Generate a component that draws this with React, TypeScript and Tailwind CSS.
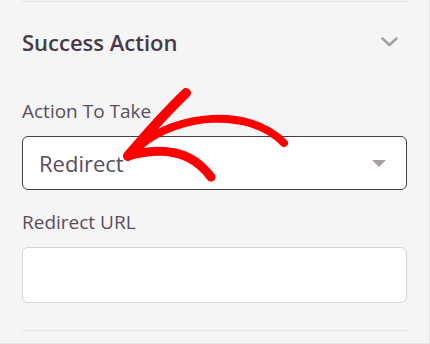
import { useState } from "react";

const SelectCaret = () => (
  <svg width="14" height="7" viewBox="0 0 14 7" className="shrink-0">
    <path d="M0 0 H14 L7 7 Z" fill="#a8a0a8" />
  </svg>
);

const Chevron = () => (
  <svg width="17" height="10" viewBox="0 0 17 10" className="shrink-0">
    <path
      d="M1.5 1.5 L8.5 8 L15.5 1.5"
      fill="none"
      stroke="#a59ca5"
      strokeWidth="2.4"
      strokeLinecap="round"
      strokeLinejoin="round"
    />
  </svg>
);

// hand drawn red arrow pointing at the select
const RedArrow = () => (
  <svg
    className="absolute inset-0 pointer-events-none"
    width="430"
    height="344"
    viewBox="0 0 430 344"
  >
    <g fill="none" stroke="#ff0000" strokeLinecap="round" strokeLinejoin="round">
      <path d="M186 93 Q160 118 128 156" strokeWidth="10" />
      <path d="M141 145 C176 115 248 106 284 143" strokeWidth="8" />
      <path d="M128 156 Q184 140 211 177" strokeWidth="9" />
    </g>
  </svg>
);

export default function App() {
  const [url, setUrl] = useState("");

  return (
    <div className="relative w-[430px] h-[344px] overflow-hidden bg-[#f5f5f5] border-r border-b border-[#e4e4e4] font-['Open_Sans',sans-serif]">
      <div className="px-[22px]">
        <div className="h-px bg-[#e2e2e2] mt-px" />

        {/* Section header */}
        <div className="mt-[26px] flex items-center justify-between pr-[9px]">
          <h2 className="text-[22px] leading-[28px] font-semibold text-[#47394a]">
            Success Action
          </h2>
          <Chevron />
        </div>

        {/* Action select */}
        <label className="block mt-[42px] text-[19px] leading-[26px] text-[#5b4d5c]">
          Action To Take
        </label>
        <div className="mt-[12px] h-[54px] flex items-center justify-between bg-white border border-[#4b3b4b] rounded-[6px] pl-[16px] pr-[20px]">
          <span className="text-[22px] leading-[30px] text-[#5b4d5c]">Redirect</span>
          <SelectCaret />
        </div>

        {/* Redirect URL */}
        <label className="block mt-[19px] text-[19px] leading-[26px] text-[#5b4d5c]">
          Redirect URL
        </label>
        <input
          value={url}
          onChange={(e) => setUrl(e.target.value)}
          className="mt-[12px] block w-full h-[56px] bg-white border border-[#d4d4d4] rounded-[6px] px-[16px] text-[19px] text-[#5b4d5c] outline-none"
        />

        <div className="mt-[27px] h-px bg-[#e2e2e2]" />
      </div>

      <RedArrow />
    </div>
  );
}
